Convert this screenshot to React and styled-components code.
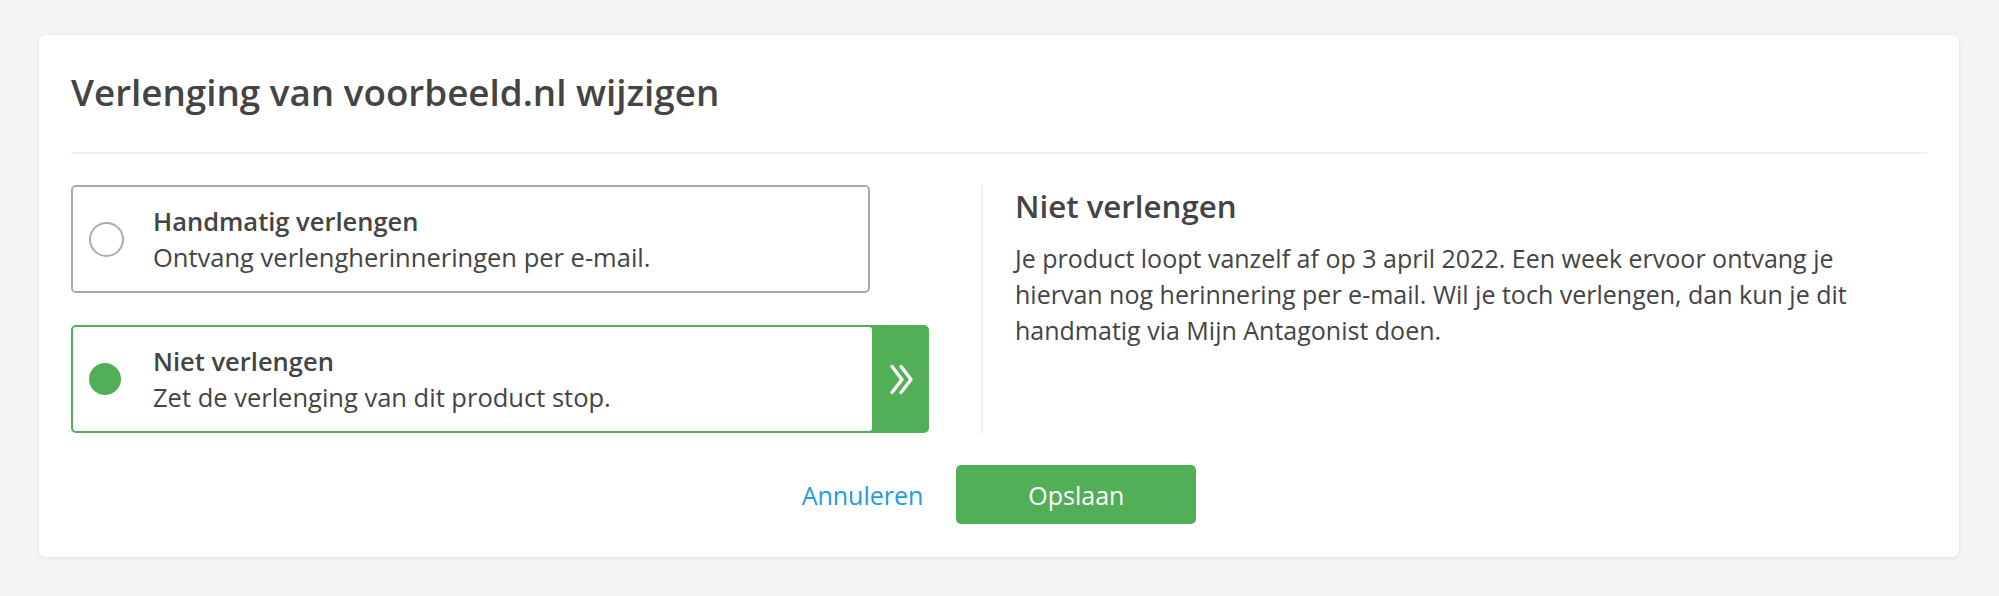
import React from "react";
import styled, { createGlobalStyle } from "styled-components";

const GREEN = "#52ae57";
const TEXT = "#444444";

const Global = createGlobalStyle`
  html, body { margin: 0; padding: 0; background: #f5f5f5; }
  body { font-family: "Open Sans", "Noto Sans", Arial, sans-serif; color: ${TEXT}; }
  * { box-sizing: border-box; }
`;

const Page = styled.div`
  padding: 35px 0 39px 39px;
`;

const Card = styled.section`
  width: 1920px;
  background: #ffffff;
  border-radius: 7px;
  box-shadow: 0 1px 5px rgba(0, 0, 0, 0.08);
  padding: 32px 32px 33px 32px;
`;

const Title = styled.h1`
  margin: 0;
  font-size: 36.8px;
  font-weight: 600;
  line-height: 51px;
  color: ${TEXT};
`;

const Divider = styled.hr`
  margin: 34px 0 31px 0;
  border: 0;
  height: 2px;
  background: #efefef;
`;

const Body = styled.div`
  display: flex;
  align-items: stretch;
`;

const OptionList = styled.div`
  flex: 0 0 858px;
  display: flex;
  flex-direction: column;
  gap: 32px;
`;

const Option = styled.div`
  display: flex;
  width: ${(p) => (p.$selected ? "858px" : "799px")};
  border: 2px solid ${(p) => (p.$selected ? GREEN : "#a9a9a9")};
  border-radius: 5px;
  background: ${(p) => (p.$selected ? GREEN : "#ffffff")};
  cursor: pointer;
`;

const OptionBody = styled.div`
  flex: 0 0 ${(p) => (p.$selected ? "799px" : "auto")};
  flex-grow: ${(p) => (p.$selected ? 0 : 1)};
  display: flex;
  align-items: center;
  gap: 29px;
  padding: 16px;
  background: #ffffff;
  border-radius: 3px;
`;

const Radio = styled.span`
  flex: 0 0 35px;
  width: 35px;
  height: 35px;
  display: flex;
  align-items: center;
  justify-content: center;
  &::after {
    content: "";
    display: block;
    border-radius: 50%;
    width: ${(p) => (p.$checked ? "32px" : "35px")};
    height: ${(p) => (p.$checked ? "32px" : "35px")};
    background: ${(p) => (p.$checked ? GREEN : "#ffffff")};
    border: ${(p) => (p.$checked ? "none" : "2px solid #ababab")};
    box-sizing: border-box;
    margin-left: ${(p) => (p.$checked ? "-3px" : "0")};
  }
`;

const OptionText = styled.div`
  display: flex;
  flex-direction: column;
  font-size: 25.5px;
  line-height: 36px;
  color: ${TEXT};
`;

const OptionTitle = styled.span`
  font-weight: 600;
`;

const OptionSub = styled.span`
  font-weight: 400;
`;

const Arrow = styled.div`
  flex: 1;
  display: flex;
  align-items: center;
  justify-content: center;
  padding-left: 6px;
`;

const Details = styled.aside`
  flex: 1;
  margin-left: 52px;
  border-left: 2px solid #eeeeee;
  padding-left: 32px;
`;

const DetailsTitle = styled.h2`
  margin: 3px 0 0 0;
  font-size: 31.25px;
  font-weight: 600;
  line-height: 37.5px;
  color: ${TEXT};
`;

const DetailsText = styled.p`
  margin: 14.5px 0 0 0;
  font-size: 25px;
  line-height: 36px;
  color: ${TEXT};
`;

const Actions = styled.div`
  margin-top: 32px;
  display: flex;
  justify-content: center;
  align-items: center;
  gap: 33px;
`;

const CancelLink = styled.a`
  font-size: 25px;
  line-height: 36px;
  color: #1e9be3;
  text-decoration: none;
  cursor: pointer;
`;

const SaveButton = styled.button`
  width: 240px;
  height: 59px;
  border: 0;
  border-radius: 5px;
  background: ${GREEN};
  color: #ffffff;
  font-family: "Open Sans", "Noto Sans", Arial, sans-serif;
  font-size: 25px;
  cursor: pointer;
`;

const ChevronIcon = () => (
  <svg width="27" height="31" viewBox="0 0 27 31" fill="none">
    <path d="M3 2.5 L13 15.5 L3 28.5" stroke="#fff" strokeWidth="3.4" strokeLinecap="round" strokeLinejoin="round" />
    <path d="M12 2.5 L22 15.5 L12 28.5" stroke="#fff" strokeWidth="3.4" strokeLinecap="round" strokeLinejoin="round" />
  </svg>
);

const options = [
  { id: "manual", title: "Handmatig verlengen", sub: "Ontvang verlengherinneringen per e-mail." },
  { id: "stop", title: "Niet verlengen", sub: "Zet de verlenging van dit product stop." },
];

export default function App() {
  const selected = "stop";
  return (
    <>
      <Global />
      <Page>
        <Card>
          <Title>Verlenging van voorbeeld.nl wijzigen</Title>
          <Divider />
          <Body>
            <OptionList>
              {options.map((o) => {
                const isSel = o.id === selected;
                return (
                  <Option key={o.id} $selected={isSel}>
                    <OptionBody $selected={isSel}>
                      <Radio $checked={isSel} />
                      <OptionText>
                        <OptionTitle>{o.title}</OptionTitle>
                        <OptionSub>{o.sub}</OptionSub>
                      </OptionText>
                    </OptionBody>
                    {isSel && (
                      <Arrow>
                        <ChevronIcon />
                      </Arrow>
                    )}
                  </Option>
                );
              })}
            </OptionList>
            <Details>
              <DetailsTitle>Niet verlengen</DetailsTitle>
              <DetailsText>
                Je product loopt vanzelf af op 3 april 2022. Een week ervoor ontvang je hiervan nog herinnering per e-mail. Wil je toch verlengen, dan kun je dit handmatig via Mijn Antagonist doen.
              </DetailsText>
            </Details>
          </Body>
          <Actions>
            <CancelLink>Annuleren</CancelLink>
            <SaveButton>Opslaan</SaveButton>
          </Actions>
        </Card>
      </Page>
    </>
  );
}
